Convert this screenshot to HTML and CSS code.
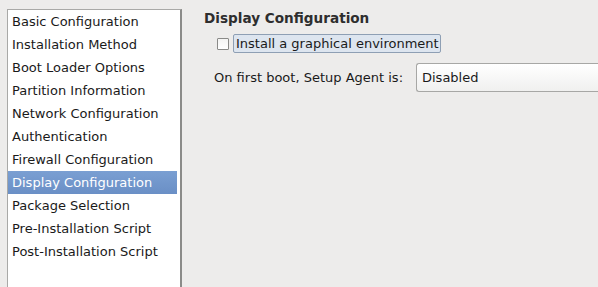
FILE: index.html
```html
<!DOCTYPE html>
<html>
<head>
<meta charset="utf-8">
<link rel="stylesheet" href="styles.css">
</head>
<body>
<div class="app">
  <div class="sidebar">
    <ul class="list">
      <li>Basic Configuration</li>
      <li>Installation Method</li>
      <li>Boot Loader Options</li>
      <li>Partition Information</li>
      <li>Network Configuration</li>
      <li>Authentication</li>
      <li>Firewall Configuration</li>
      <li class="selected">Display Configuration</li>
      <li>Package Selection</li>
      <li>Pre-Installation Script</li>
      <li>Post-Installation Script</li>
    </ul>
  </div>
  <div class="content">
    <h1 class="title">Display Configuration</h1>
    <label class="check-row">
      <span class="checkbox"></span>
      <span class="check-label">Install a graphical environment</span>
    </label>
    <div class="agent-row">
      <span class="agent-label">On first boot, Setup Agent is:</span>
      <div class="combo">Disabled</div>
    </div>
  </div>
</div>
</body>
</html>
```
FILE: styles.css
```css
html, body {
  margin: 0;
  padding: 0;
  background: #edeceb;
  font-family: "DejaVu Sans", sans-serif;
  font-size: 13px;
  color: #1a1a1a;
}
.app {
  display: flex;
  height: 287px;
  width: 598px;
  overflow: hidden;
}
.sidebar {
  padding: 9px 0 0 7px;
  width: 175px;
  flex: none;
}
.list {
  list-style: none;
  margin: 0;
  padding: 0 3px 0 0;
  height: 290px;
  background: #ffffff;
  border: 1px solid #a9a9a7;
  border-right: 2px solid #8b8b89;
  box-sizing: border-box;
}
.list li {
  height: 23px;
  line-height: 23px;
  padding-left: 4px;
  white-space: nowrap;
}
.list li.selected {
  background: linear-gradient(#7a9fd2, #6a8fc6);
  color: #ffffff;
}
.content {
  flex: 1;
  padding: 10px 0 0 22px;
  min-width: 0;
}
.title {
  margin: 0;
  font-size: 13.6px;
  font-weight: bold;
  line-height: 17px;
  color: #2e2e2e;
}
.check-row {
  display: flex;
  align-items: center;
  margin: 7px 0 0 13px;
  height: 19px;
}
.checkbox {
  width: 10px;
  height: 10px;
  border: 1px solid #8a8a88;
  background: linear-gradient(#f4f4f3, #ffffff);
  border-radius: 1px;
  flex: none;
}
.check-label {
  margin-left: 4px;
  padding: 0 1px 0 2px;
  border: 1px solid #8e9fb4;
  border-radius: 2px;
  background: #dde5ef;
  line-height: 17px;
}
.agent-row {
  display: flex;
  align-items: center;
  margin: 10px 0 0 10px;
}
.agent-label {
  width: 202px;
  flex: none;
}
.combo {
  flex: 1;
  height: 27px;
  line-height: 27px;
  padding-left: 5px;
  border: 1px solid #a7a7a5;
  border-right: none;
  border-radius: 3px 0 0 3px;
  background: linear-gradient(#ffffff, #f0f0ef);
}
```
